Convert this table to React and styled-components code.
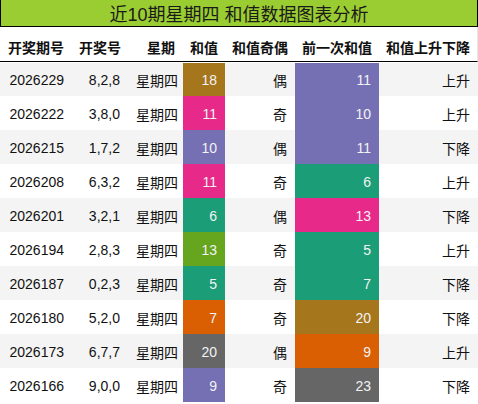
import React from "react";
import styled, { createGlobalStyle } from "styled-components";

const Global = createGlobalStyle`
  html, body { margin: 0; padding: 0; background: #fff; }
  body { font-family: "Liberation Sans", "Noto Sans CJK SC", Arial, sans-serif; }
`;

const C = {
  teal: "#1B9E77",
  orange: "#D95F02",
  purple: "#7570B3",
  pink: "#E7298A",
  green: "#66A61E",
  brown: "#A6761D",
  gray: "#666666",
};

const rows = [
  ["2026229", "8,2,8", 18, C.brown, "偶", 11, C.purple, "上升"],
  ["2026222", "3,8,0", 11, C.pink, "奇", 10, C.purple, "上升"],
  ["2026215", "1,7,2", 10, C.purple, "偶", 11, C.purple, "下降"],
  ["2026208", "6,3,2", 11, C.pink, "奇", 6, C.teal, "上升"],
  ["2026201", "3,2,1", 6, C.teal, "偶", 13, C.pink, "下降"],
  ["2026194", "2,8,3", 13, C.green, "奇", 5, C.teal, "上升"],
  ["2026187", "0,2,3", 5, C.teal, "奇", 7, C.teal, "下降"],
  ["2026180", "5,2,0", 7, C.orange, "奇", 20, C.brown, "下降"],
  ["2026173", "6,7,7", 20, C.gray, "偶", 9, C.orange, "上升"],
  ["2026166", "9,0,0", 9, C.purple, "奇", 23, C.gray, "下降"],
];

const widths = [72, 56, 55, 42, 70, 84, 99];

const Wrap = styled.div`
  width: 478px;
`;

const Title = styled.div`
  box-sizing: border-box;
  height: 27px;
  border: 1px solid #000;
  border-top: none;
  background: #9acd32;
  color: #1a1a1a;
  font-size: 18px;
  line-height: 18px;
  padding-top: 6px;
  text-align: center;
`;

const Table = styled.table`
  width: 478px;
  border-collapse: separate;
  border-spacing: 0;
  table-layout: fixed;
  font-size: 14px;
  color: #111;
`;

const Th = styled.th`
  box-sizing: border-box;
  height: 35px;
  padding: 5px 8px 0 7px;
  font-weight: bold;
  text-align: right;
  white-space: nowrap;
  border-bottom: 1px solid #000;
  ${(p) => (p.$edge ? "border-right: 1px solid #e6e6e6;" : "")}
`;

const Row = styled.tr`
  background: ${(p) => (p.$alt ? "#f4f4f4" : "#fff")};
  &:first-child td {
    border-top: 1px solid #fff;
  }
`;

const Td = styled.td`
  box-sizing: border-box;
  height: 34px;
  padding: 1px 8px 0 8px;
  text-align: right;
  white-space: nowrap;
  background: ${(p) => p.$bg || "transparent"};
  color: ${(p) => (p.$bg ? "#f3f3f3" : "#111")};
`;

const headers = ["开奖期号", "开奖号", "星期", "和值", "和值奇偶", "前一次和值", "和值上升下降"];

export default function App() {
  return (
    <Wrap>
      <Global />
      <Title>近10期星期四 和值数据图表分析</Title>
      <Table>
        <colgroup>
          {widths.map((w, i) => (
            <col key={i} style={{ width: w }} />
          ))}
        </colgroup>
        <thead>
          <tr>
            {headers.map((h, i) => (
              <Th key={h} $edge={i === headers.length - 1}>
                {h}
              </Th>
            ))}
          </tr>
        </thead>
        <tbody>
          {rows.map((r, i) => (
            <Row key={r[0]} $alt={i % 2 === 0}>
              <Td>{r[0]}</Td>
              <Td>{r[1]}</Td>
              <Td>星期四</Td>
              <Td $bg={r[3]}>{r[2]}</Td>
              <Td>{r[4]}</Td>
              <Td $bg={r[6]}>{r[5]}</Td>
              <Td>{r[7]}</Td>
            </Row>
          ))}
        </tbody>
      </Table>
    </Wrap>
  );
}
